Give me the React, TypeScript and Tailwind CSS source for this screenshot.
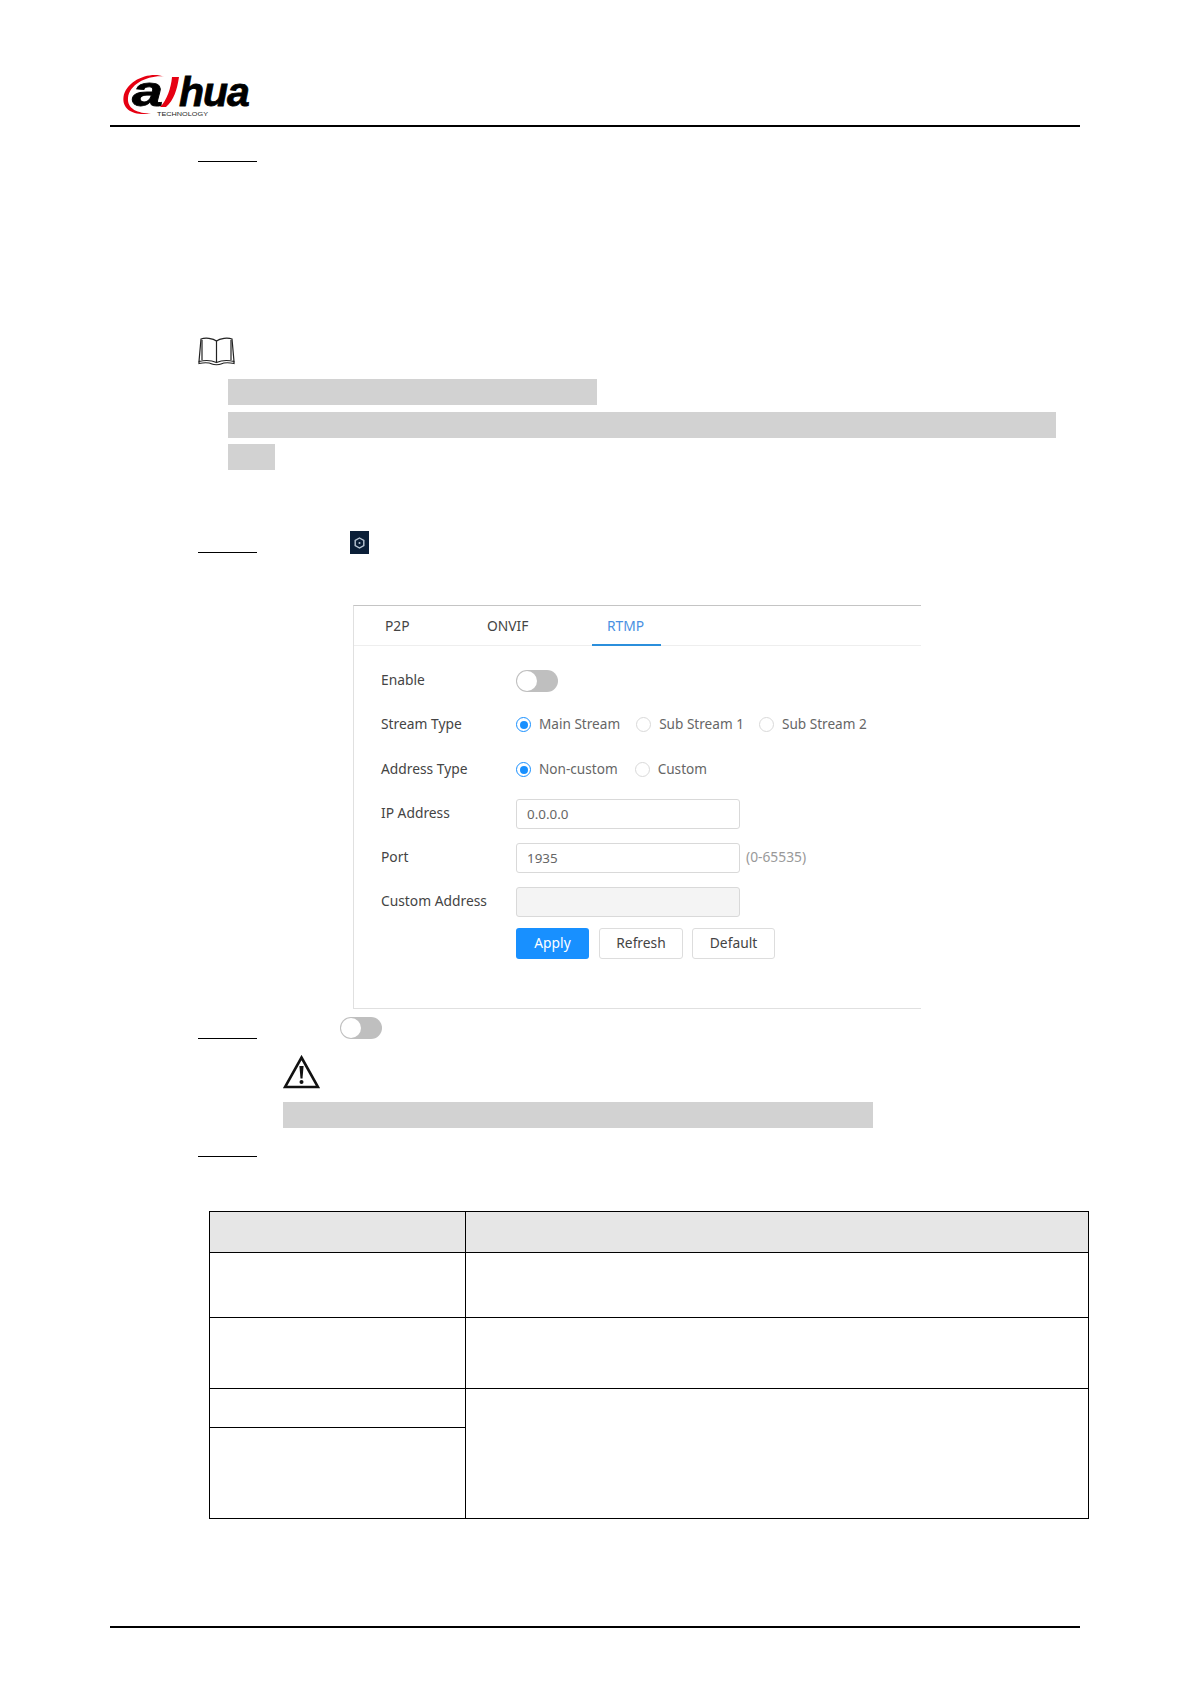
const uiFont = "font-['Noto_Sans',sans-serif]"

function Rule() {
  return <div className="w-[59px] h-px bg-black shrink-0" />
}

function GrayBar({ className }: { className: string }) {
  return <div className={`h-[26px] bg-[#d2d2d2] ${className}`} />
}

function Toggle({ className = '' }: { className?: string }) {
  return (
    <div className={`w-[42px] h-[22px] rounded-full bg-[#bfbfbf] flex items-center pl-[1px] ${className}`}>
      <div className="w-[20px] h-[20px] rounded-full bg-white" />
    </div>
  )
}

function Radio({ checked, label, className = '' }: { checked?: boolean; label: string; className?: string }) {
  return (
    <div className={`flex items-center ${className}`}>
      {checked ? (
        <div className="w-[15px] h-[15px] rounded-full border border-[#1890ff] flex items-center justify-center shrink-0">
          <div className="w-[8px] h-[8px] rounded-full bg-[#1890ff]" />
        </div>
      ) : (
        <div className="w-[15px] h-[15px] rounded-full border border-[#d9d9d9] shrink-0" />
      )}
      <span className="ml-[8px] pb-[1px] text-[13.6px] text-[#666] whitespace-nowrap">{label}</span>
    </div>
  )
}

function FormRow({ label, className = '', children }: { label: string; className?: string; children?: React.ReactNode }) {
  return (
    <div className={`flex items-center h-[30px] ${className}`}>
      <div className="w-[135px] shrink-0 pb-[1px] text-[13.8px] text-[#444] whitespace-nowrap">{label}</div>
      {children}
    </div>
  )
}

function TextBox({ value, disabled }: { value?: string; disabled?: boolean }) {
  return (
    <div className={`w-[224px] h-[30px] rounded-[3px] border border-[#d9d9d9] pl-[10px] flex items-center text-[13.4px] text-[#666] ${disabled ? 'bg-[#f4f4f4]' : 'bg-white'}`}>
      {value}
    </div>
  )
}

function Logo() {
  return (
    <svg width="135" height="46" viewBox="0 0 135 46" className="ml-[10px] block overflow-visible">
      <path d="M44 6.500C30 1 6 10 3.500 27C2 40 14 46 31 43.500C18 43.500 7 39 8 28C9.500 14 28 5 44 6.500Z" fill="#e60012" />
      <text x="12" y="36" fontFamily="Liberation Sans" fontWeight="700" fontStyle="italic" fontSize="43" textLength="31" lengthAdjust="spacingAndGlyphs" stroke="#000" strokeWidth="0.800" fill="#000">a</text>
      <path d="M52 7L59 7C57 20 54 30 46 37L40 37C47 30 51 18 52 7Z" fill="#e60012" />
      <text x="59" y="36" fontFamily="Liberation Sans" fontWeight="700" fontStyle="italic" fontSize="41" letterSpacing="-1" stroke="#000" strokeWidth="0.800" fill="#000">hua</text>
      <text x="37" y="45.500" fontFamily="Liberation Sans" fontSize="6" textLength="51" lengthAdjust="spacingAndGlyphs" fill="#222">TECHNOLOGY</text>
    </svg>
  )
}

function BookIcon() {
  return (
    <svg width="37" height="29" viewBox="0 0 37 29" fill="none" stroke="#222" strokeWidth="1.200" className="block">
      <path d="M18.500 4C15 1 7 0.500 3 2L1 24.500C7 23 14 23.500 18.500 25.500C23 23.500 30 23 36 24.500L34 2C30 0.500 22 1 18.500 4Z" fill="white" />
      <path d="M18.500 4V25.500M4 3V23M33 3V23" />
      <path d="M1 24.500V26.500C6 25.500 11 25.500 14 27C16 28 21 28 23 27C26 25.500 31 25.500 36 26.500V24.500" />
    </svg>
  )
}

function WarningIcon() {
  return (
    <svg width="37" height="34" viewBox="0 0 37 34" className="block ml-[173px]">
      <path d="M18.500 2.500L35 32H2Z" fill="white" stroke="#111" strokeWidth="2.600" strokeLinejoin="miter" />
      <path d="M16.400 11H20.600L19.500 23.500H17.500Z" fill="#111" />
      <circle cx="18.500" cy="27" r="2" fill="#111" />
    </svg>
  )
}

function GearTile() {
  return (
    <div className="w-[19px] h-[23px] bg-[#0b1f38] flex items-center justify-center ml-[93px]">
      <svg width="11" height="12" viewBox="0 0 11 12" fill="none" stroke="#b9c6d4" strokeWidth="1.400">
        <path d="M5.500 1L9.800 3.500V8.500L5.500 11L1.200 8.500V3.500Z" />
        <circle cx="5.500" cy="6" r="1" fill="#b9c6d4" stroke="none" />
      </svg>
    </div>
  )
}

function RtmpPanel() {
  return (
    <div className={`${uiFont} ml-[243px] mt-[51px] w-[568px] h-[404px] border-t border-t-[#c4c4c4] border-l border-l-[#e0e0e0] border-b border-b-[#e0e0e0]`}>
      <div className="relative h-[40px] border-b border-[#eeeeee] text-[13.8px]">
        <span className="absolute left-[31px] top-[10px] text-[#444]">P2P</span>
        <span className="absolute left-[133px] top-[10px] text-[#444]">ONVIF</span>
        <span className="absolute left-[253px] top-[10px] text-[#4a90e2]">RTMP</span>
        <div className="absolute left-[238px] top-[38px] w-[69px] h-[2px] bg-[#2b8fdc]" />
      </div>
      <div className="pl-[27px]">
        <FormRow label="Enable" className="mt-[20px]">
          <Toggle />
        </FormRow>
        <FormRow label="Stream Type" className="mt-[14px]">
          <Radio checked label="Main Stream" />
          <Radio label="Sub Stream 1" className="ml-[16px]" />
          <Radio label="Sub Stream 2" className="ml-[15px]" />
        </FormRow>
        <FormRow label="Address Type" className="mt-[15px]">
          <Radio checked label="Non-custom" />
          <Radio label="Custom" className="ml-[17px]" />
        </FormRow>
        <FormRow label="IP Address" className="mt-[14px]">
          <TextBox value="0.0.0.0" />
        </FormRow>
        <FormRow label="Port" className="mt-[14px]">
          <TextBox value="1935" />
          <span className="ml-[6px] pb-[1px] text-[13.8px] text-[#999]">(0-65535)</span>
        </FormRow>
        <FormRow label="Custom Address" className="mt-[14px]">
          <TextBox disabled />
        </FormRow>
        <div className="flex mt-[11px] ml-[135px] text-[13.8px]">
          <button className="w-[73px] h-[31px] rounded-[3px] bg-[#1890ff] text-white">Apply</button>
          <button className="w-[84px] h-[31px] rounded-[3px] border border-[#dddddd] bg-white text-[#444] ml-[10px]">Refresh</button>
          <button className="w-[83px] h-[31px] rounded-[3px] border border-[#dddddd] bg-white text-[#444] ml-[9px]">Default</button>
        </div>
      </div>
    </div>
  )
}

function ParamTable() {
  const cell = 'border border-black p-0'
  return (
    <table className="ml-[99px] mt-[54px] w-[880px] border-collapse table-fixed">
      <colgroup>
        <col className="w-[256px]" />
        <col />
      </colgroup>
      <tbody>
        <tr className="h-[41px] bg-[#e6e6e6]"><td className={cell} /><td className={cell} /></tr>
        <tr className="h-[65px]"><td className={cell} /><td className={cell} /></tr>
        <tr className="h-[71px]"><td className={cell} /><td className={cell} /></tr>
        <tr className="h-[39px]"><td className={cell} /><td className={cell} rowSpan={2} /></tr>
        <tr className="h-[91px]"><td className={cell} /></tr>
      </tbody>
    </table>
  )
}

export default function App() {
  return (
    <div className="w-[1191px] h-[1684px] bg-white pt-[70px] overflow-hidden">
      <div className="w-[970px] ml-[110px]">
        <Logo />
        <div className="h-[2px] bg-black mt-[9px]" />

        <div className="ml-[88px] mt-[34px]"><Rule /></div>

        <div className="ml-[88px] mt-[175px]"><BookIcon /></div>
        <div className="ml-[118px] mt-[13px] flex flex-col items-start">
          <GrayBar className="w-[369px]" />
          <GrayBar className="w-[828px] mt-[7px]" />
          <GrayBar className="w-[47px] mt-[6px]" />
        </div>

        <div className="ml-[88px] mt-[61px] flex items-end">
          <div className="mb-[1px]"><Rule /></div>
          <GearTile />
        </div>

        <RtmpPanel />

        <div className="ml-[88px] mt-[8px] flex items-end">
          <Rule />
          <Toggle className="ml-[83px]" />
        </div>

        <div className="mt-[16px]"><WarningIcon /></div>
        <GrayBar className="w-[590px] ml-[173px] mt-[13px]" />

        <div className="ml-[88px] mt-[28px]"><Rule /></div>

        <ParamTable />

        <div className="h-[2px] bg-black mt-[107px]" />
      </div>
    </div>
  )
}
